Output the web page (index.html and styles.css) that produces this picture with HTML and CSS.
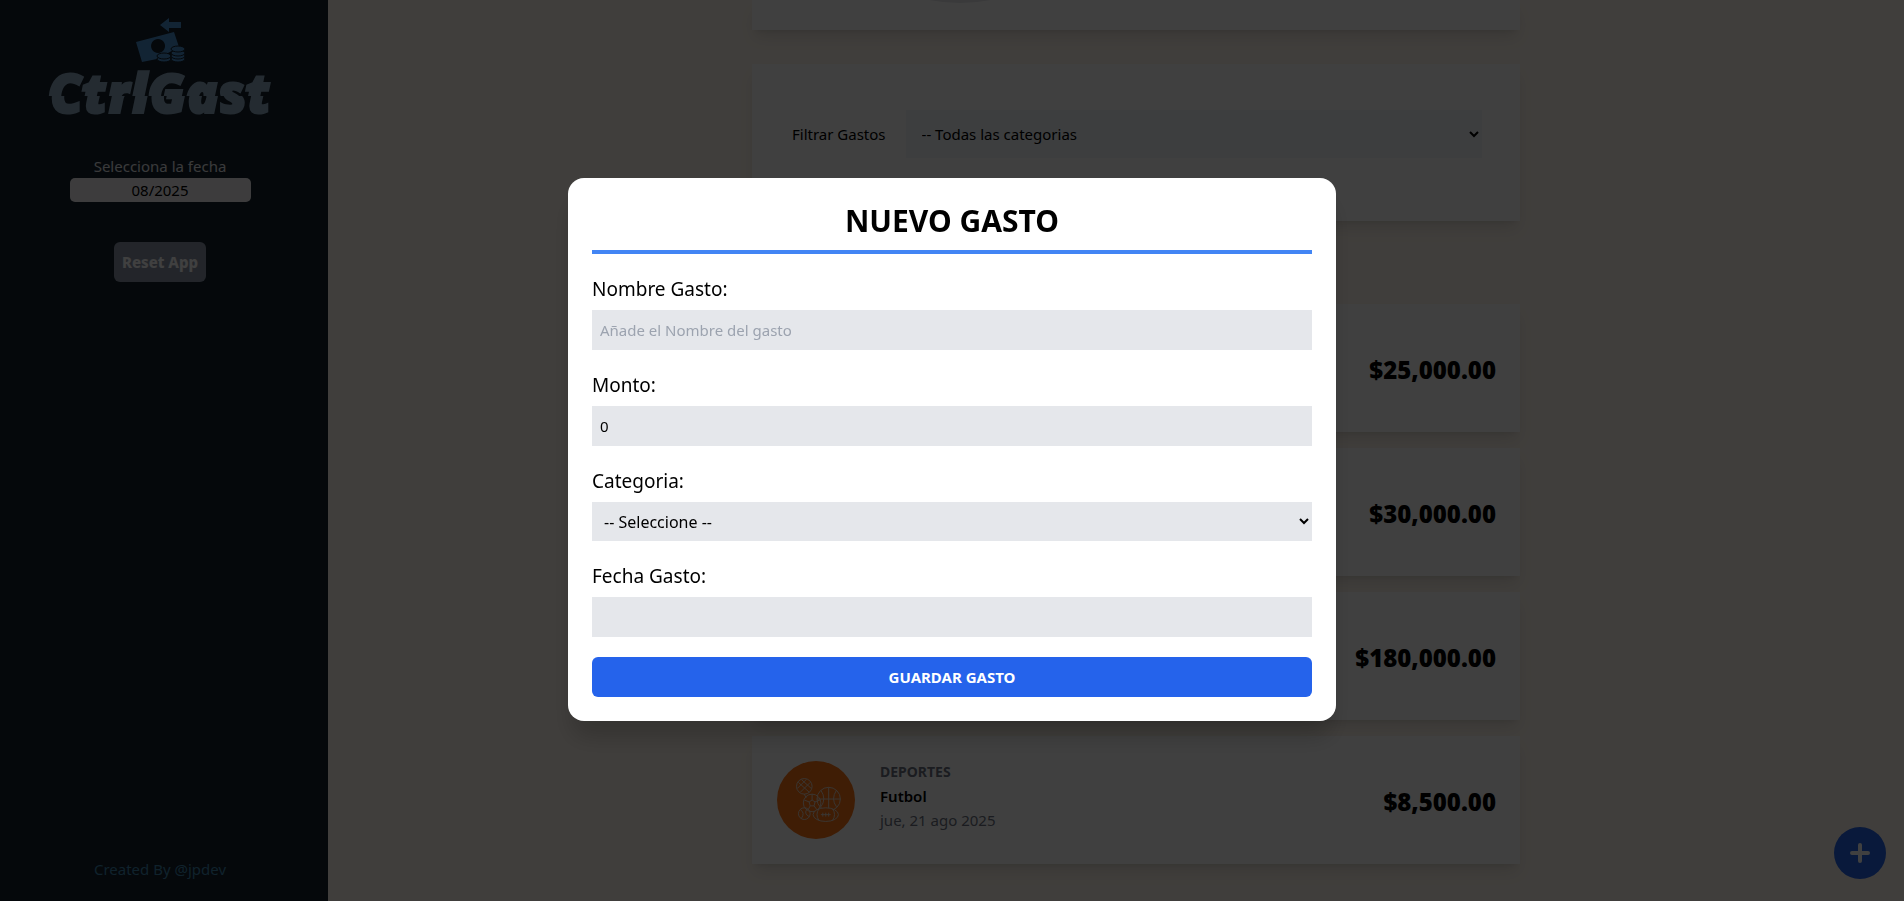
FILE: index.html
```html
<!DOCTYPE html>
<html lang="es">
<head>
    <meta charset="UTF-8">
    <meta name="viewport" content="width=device-width, initial-scale=1.0">
    <title>CtrlGast</title>
    <link rel="stylesheet" href="styles.css">
</head>
<body>
    <div class="app">
        <aside class="sidebar">
            <svg class="logo" viewBox="0 0 240 112" role="img" aria-label="CtrlGast">
                <defs>
                    <clipPath id="top"><rect x="0" y="40" width="240" height="44"/></clipPath>
                    <clipPath id="bottom"><rect x="0" y="84" width="240" height="28"/></clipPath>
                    <text id="word" class="logo-text" x="7" y="101">CtrlGast</text>
                </defs>
                <g fill="#4a90d0" stroke="#14202c">
                    <path stroke="none" d="M120 13l9-7v4h12v6h-12v4z"/>
                    <path stroke="none" fill-rule="evenodd" d="M96 30l38-10 5 15-22 12-15 3zM118 27a7 7 0 1 0 .1 0z"/>
                    <ellipse cx="124" cy="47" rx="7" ry="3"/>
                    <ellipse cx="124" cy="44" rx="7" ry="3"/>
                    <ellipse cx="138" cy="47" rx="7" ry="3"/>
                    <ellipse cx="138" cy="44" rx="7" ry="3"/>
                    <ellipse cx="138" cy="41" rx="7" ry="3"/>
                    <ellipse cx="138" cy="37" rx="7" ry="3"/>
                </g>
                <g fill="#8fabc4" stroke="#8fabc4">
                    <use href="#word" clip-path="url(#top)"/>
                    <g clip-path="url(#bottom)"><use href="#word" x="3"/></g>
                </g>
            </svg>
            <div class="date-picker">
                <label for="month">Selecciona la fecha</label>
                <input type="text" id="month" value="08/2025">
            </div>
            <button type="button" class="reset-btn">Reset App</button>
            <a class="credits" href="#">Created By @jpdev</a>
        </aside>

        <main>
            <section class="card summary">
                <svg class="ring" viewBox="0 0 320 320" aria-hidden="true">
                    <circle cx="160" cy="160" r="154"/>
                </svg>
            </section>

            <form class="card filter">
                <label for="filter">Filtrar Gastos</label>
                <select id="filter">
                    <option>-- Todas las categorias</option>
                </select>
            </form>

            <section class="expenses">
                <article class="card expense"><p class="amount">$25,000.00</p></article>
                <article class="card expense"><p class="amount">$30,000.00</p></article>
                <article class="card expense"><p class="amount">$180,000.00</p></article>
                <article class="card expense">
                    <svg class="category-icon" viewBox="0 0 80 80" aria-hidden="true">
                        <circle cx="40" cy="40" r="40" fill="#f97316"/>
                        <g fill="none" stroke="#e5d5c5" stroke-width="1">
                            <circle cx="28" cy="26" r="8"/>
                            <path d="M22 22l11 10M25 19l10 9M21 28l9-9M24 32l10-10M28 34l2 4"/>
                            <circle cx="53" cy="39" r="12"/>
                            <path d="M53 27v24M41 39h24M45 30q6 9 0 17M61 30q-6 9 0 17"/>
                            <circle cx="36" cy="43" r="9"/>
                            <path d="M36 40l3 2-1 4h-4l-1-4zM28 40l5 2M36 34v6M44 40l-5 2M32 50l2-4M41 50l-3-4"/>
                            <circle cx="28" cy="54" r="6"/>
                            <path d="M24 50q5 3 1 9M31 49q-4 5 2 8"/>
                            <ellipse cx="50" cy="55" rx="13" ry="7" fill="#f97316"/>
                            <path d="M43 49q-4 6 0 12M57 49q4 6 0 12M45 55h10M47 53v4M50 53v4M53 53v4"/>
                        </g>
                    </svg>
                    <div class="expense-info">
                        <p class="category">Deportes</p>
                        <p class="name">Futbol</p>
                        <p class="date">jue, 21 ago 2025</p>
                    </div>
                    <p class="amount">$8,500.00</p>
                </article>
            </section>
        </main>
    </div>

    <button type="button" class="add-btn" aria-label="Nuevo gasto">
        <svg viewBox="0 0 24 24"><path d="M12 4v16M4 12h16"/></svg>
    </button>

    <div class="overlay">
        <form class="modal" role="dialog" aria-labelledby="modal-title">
            <h2 id="modal-title">Nuevo Gasto</h2>
            <div class="field">
                <label for="name">Nombre Gasto:</label>
                <input type="text" id="name" placeholder="Añade el Nombre del gasto">
            </div>
            <div class="field">
                <label for="amount">Monto:</label>
                <input type="text" id="amount" value="0">
            </div>
            <div class="field">
                <label for="category">Categoria:</label>
                <select id="category">
                    <option>-- Seleccione --</option>
                </select>
            </div>
            <div class="field">
                <label for="date">Fecha Gasto:</label>
                <input type="text" id="date">
            </div>
            <button type="submit" class="submit-btn">Guardar Gasto</button>
        </form>
    </div>
</body>
</html>
```
FILE: styles.css
```css
:root {
    --page: #fff7ed;
    --sidebar: #14202c;
    --blue: #2563eb;
    --field: #e5e7eb;
}
* {
    box-sizing: border-box;
    margin: 0;
}
body {
    height: 100vh;
    overflow: hidden;
    font-family: 'Noto Sans', sans-serif;
    font-size: 15px;
    line-height: 24px;
    background: var(--page);
    color: #000;
}
input, select, button {
    font: inherit;
    color: inherit;
    border: none;
    border-radius: 0;
}
.app {
    display: flex;
    height: 100vh;
}
.sidebar {
    flex: 0 0 328px;
    display: flex;
    flex-direction: column;
    align-items: center;
    padding: 12px 8px 20px 0;
    background: var(--sidebar);
    color: #e5e7eb;
}
.logo {
    width: 240px;
    height: 112px;
}
.logo-text {
    font-family: 'Noto Sans', sans-serif;
    font-size: 54px;
    font-weight: 900;
    font-style: italic;
    stroke-width: 2px;
}
.date-picker {
    display: flex;
    flex-direction: column;
    align-items: center;
    margin: 30px 0 40px;
}
.date-picker input {
    width: 181px;
    height: 24px;
    border-radius: 5px;
    background: #f3f0f3;
    color: #000;
    text-align: center;
}
.reset-btn {
    height: 40px;
    padding: 0 8px;
    border-radius: 6px;
    background: #8b95a8;
    color: #fff;
    font-weight: 800;
}
.credits {
    margin-top: auto;
    color: #4088b0;
    text-decoration: none;
}
main {
    flex: 1;
    padding-left: 40px;
}
.card {
    background: #fff;
    box-shadow: 0 10px 15px -3px rgba(0, 0, 0, 0.1), 0 4px 6px -4px rgba(0, 0, 0, 0.1);
}
.summary, .filter, .expenses {
    max-width: 768px;
    margin: 0 auto;
}
.summary {
    display: flex;
    align-items: flex-end;
    height: 30px;
    padding: 0 48px 27px;
}
.ring {
    flex: none;
    width: 320px;
    height: 320px;
    fill: none;
    stroke: #e5e7eb;
    stroke-width: 12;
}
.filter {
    display: flex;
    align-items: center;
    gap: 20px;
    height: 157px;
    margin-top: 34px;
    padding: 0 38px 18px 40px;
}
.filter select {
    flex: 1;
    height: 48px;
    padding: 0 12px;
    background: #f1f5f9;
}
.expenses {
    display: grid;
    gap: 16px;
    margin-top: 83px;
}
.expense {
    display: flex;
    align-items: center;
    gap: 24px;
    height: 128px;
    padding: 24px;
}
.category-icon {
    width: 80px;
    height: 80px;
    padding: 1px;
}
.expense-info {
    padding-bottom: 8px;
}
.category {
    font-size: 14px;
    font-weight: 700;
    text-transform: uppercase;
    color: #6b7280;
}
.name {
    font-weight: 600;
}
.date {
    color: #6b7280;
}
.amount {
    margin-left: auto;
    padding-top: 4px;
    font-size: 24px;
    font-weight: 900;
}
.add-btn {
    position: fixed;
    right: 18px;
    bottom: 22px;
    width: 52px;
    height: 52px;
    padding: 14px;
    border-radius: 50%;
    background: var(--blue);
}
.add-btn svg {
    display: block;
    fill: none;
    stroke: #fff;
    stroke-width: 4;
    stroke-linecap: round;
}
.overlay {
    position: fixed;
    inset: 0;
    display: flex;
    align-items: center;
    justify-content: center;
    padding-bottom: 2px;
    background: rgba(0, 0, 0, 0.75);
}
.modal {
    width: 768px;
    max-width: 100%;
    padding: 24px;
    border-radius: 16px;
    background: #fff;
    box-shadow: 0 20px 25px -5px rgba(0, 0, 0, 0.2);
}
.modal h2 {
    margin-bottom: 20px;
    padding-bottom: 10px;
    border-bottom: 4px solid #4285f4;
    font-size: 30px;
    line-height: 38px;
    text-align: center;
    text-transform: uppercase;
}
.field {
    display: flex;
    flex-direction: column;
    gap: 6px;
    margin-bottom: 20px;
}
.field label {
    font-size: 19px;
    line-height: 30px;
}
.field input, .field select {
    height: 40px;
    padding: 0 8px;
    background: var(--field);
}
.field select {
    height: 39px;
    font-size: 16px;
}
.field input::placeholder {
    color: #9ca3af;
}
.submit-btn {
    width: 100%;
    height: 40px;
    border-radius: 6px;
    background: var(--blue);
    color: #fff;
    font-weight: 700;
    text-transform: uppercase;
}
```
